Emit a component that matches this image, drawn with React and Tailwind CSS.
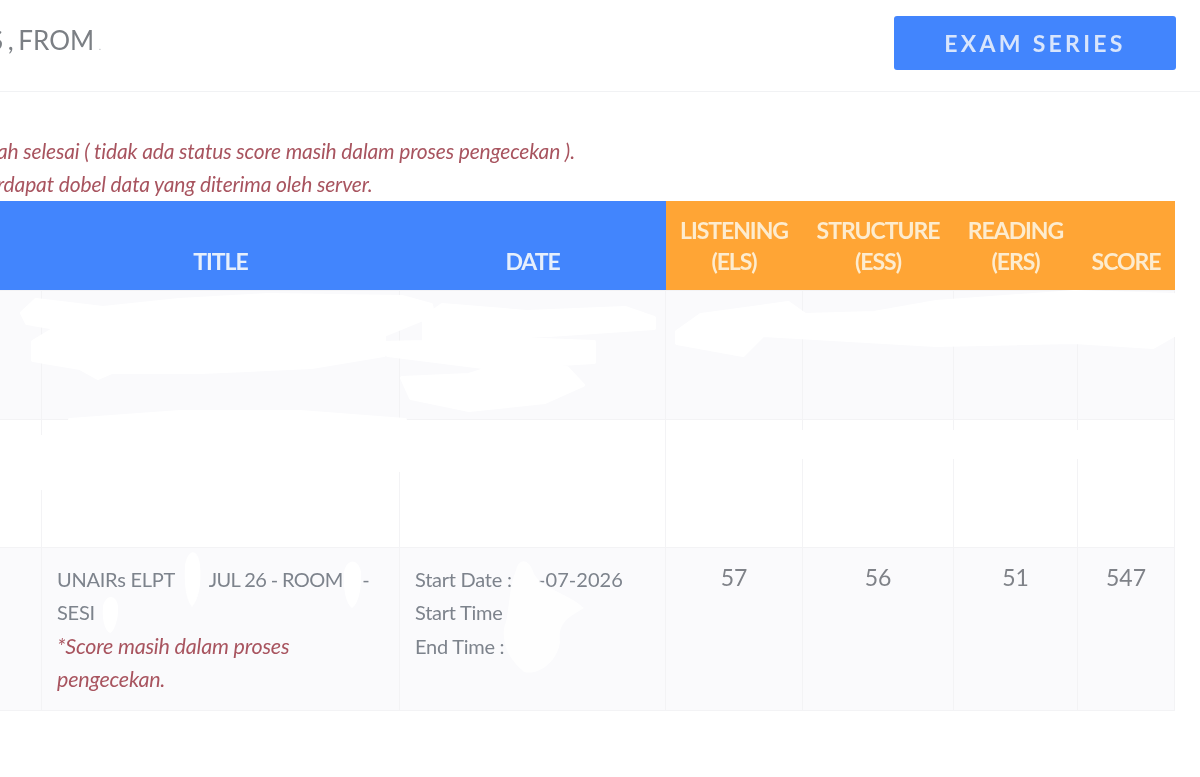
const font = { fontFamily: 'Lato, "Open Sans", sans-serif' };

const headerBlue = "bg-[#4285fd] text-[#e6effc] font-bold text-[23px] leading-[31px] tracking-[-1.05px] align-bottom pb-[13px] px-0 text-center";
const headerOrange = "bg-[#ffa535] text-[#fdeccf] font-bold text-[23px] leading-[31px] tracking-[-1.05px] align-bottom pb-[13px] px-0 text-center";
const cell = "border border-[#f3f3f5] align-top";
const scoreCell = "border border-[#f3f3f5] align-top text-center text-[23px] leading-[33px] pt-[13px] text-[#7f8288]";

function Row({ tone, height, title, date, scores }) {
  return (
    <tr className={tone} style={{ height }}>
      <td className={cell}></td>
      <td className={`${cell} pl-[15px] pr-4 pt-[15px] text-[20px] leading-[33.5px] text-[#7d838c] tracking-[-0.25px]`}>{title}</td>
      <td className={`${cell} pl-[15px] pr-2 pt-[15px] text-[20px] leading-[33.5px] text-[#7d838c] tracking-[-0.25px]`}>{date}</td>
      {[0, 1, 2, 3].map((i) => (
        <td key={i} className={scoreCell}>{scores ? scores[i] : ""}</td>
      ))}
    </tr>
  );
}

export default function App() {
  return (
    <div className="relative h-[777px] w-[1200px] overflow-hidden bg-white blur-[0.7px]" style={font}>
      <header className="flex h-[92px] items-start justify-between border-b border-[#f1f2f4] pr-6">
        <h1 className="ml-[-11px] mt-[23px] text-[26px] leading-[34px] text-[#7b7f84] tracking-[0px] [word-spacing:-2px]">
          S , FROM <span className="text-[10px] text-[#b9bcc0]">.</span>
        </h1>
        <button className="mt-4 flex h-[54px] w-[282px] items-center justify-center rounded-[3px] bg-[#4285fd] text-[23px] font-bold tracking-[3.3px] text-[#d8e5fc]">
          EXAM SERIES
        </button>
      </header>

      <div className="pt-[42px] pb-[1px] text-[21px] italic leading-[33px] text-[#a8545f] tracking-[-0.15px] whitespace-nowrap">
        <p className="ml-[-14px]">dah selesai ( tidak ada status score masih dalam proses pengecekan ).</p>
        <p className="ml-[-20px]">terdapat dobel data yang diterima oleh server.</p>
      </div>

      <table className="ml-[-1px] w-[1175px] table-fixed border-collapse">
        <colgroup>
          <col className="w-[42px]" />
          <col className="w-[358px]" />
          <col className="w-[266px]" />
          <col className="w-[137px]" />
          <col className="w-[151px]" />
          <col className="w-[124px]" />
          <col className="w-[97px]" />
        </colgroup>
        <thead>
          <tr className="h-[89px]">
            <th className={headerBlue}></th>
            <th className={headerBlue}>TITLE</th>
            <th className={headerBlue}>DATE</th>
            <th className={headerOrange}>LISTENING<br />(ELS)</th>
            <th className={headerOrange}>STRUCTURE<br />(ESS)</th>
            <th className={headerOrange}>READING<br />(ERS)</th>
            <th className={headerOrange}>SCORE</th>
          </tr>
        </thead>
        <tbody>
          <Row tone="bg-[#fafafc]" height={129} />
          <Row tone="bg-white" height={128} />
          <Row
            tone="bg-[#fafafc]"
            height={163}
            title={
              <>
                UNAIRs ELPT &nbsp;&nbsp;&nbsp;&nbsp;&nbsp;&nbsp;<span className="tracking-[-0.6px]">JUL 26 - ROOM</span> &nbsp;&nbsp;&nbsp;-
                <br />
                SESI
                <br />
                <em className="text-[#a8545f] text-[21.5px] tracking-[-0.2px]">*Score masih dalam proses pengecekan.</em>
              </>
            }
            date={
              <>
                Start Date : &nbsp;&nbsp;&nbsp;&nbsp;<span className="ml-[2px] tracking-[0.05px]">-07-2026</span>
                <br />
                Start Time
                <br />
                End Time :
              </>
            }
            scores={[57, 56, 51, 547]}
          />
        </tbody>
      </table>

      <svg className="absolute left-0 top-0 h-[777px] w-[1200px]" viewBox="0 0 1200 777" fill="#ffffff" stroke="#ffffff" strokeWidth="4" strokeLinejoin="round">
        <path d="M22 313 L36 300 L103 308 L179 300 L268 295 L402 297 L431 305 L433 315 L384 335 L384 355 L312 367 L201 372 L112 372 L98 378 L80 368 L33 360 L33 342 L56 328 L27 323 Z" />
        <path d="M424 318 L442 305 L527 312 L625 308 L654 318 L654 328 L549 335 L464 337 L594 342 L594 362 L491 368 L388 355 L384 343 L424 342 Z" />
        <path d="M402 378 L469 375 L491 368 L567 368 L583 385 L545 402 L469 410 L411 398 Z" />
        <path d="M677 332 L701 315 L788 303 L805 315 L874 313 L936 302 L1074 292 L1174 295 L1174 335 L1153 347 L1074 342 L936 345 L763 335 L743 355 L677 343 Z" />
        <path d="M70 420 L180 412 L300 412 L405 420 L405 470 L70 470 Z" />
        <path d="M38 437 H44 V488 H38 Z" />
        <path d="M398 450 H402 V462 H398 Z" />
        <path d="M690 432 H1170 V457 H690 Z" />
        <g strokeWidth="0">
          <path d="M185 565 C188 548 198 548 200 565 C202 585 198 600 192 607 C186 600 184 585 185 565 Z" />
          <path d="M344 572 C347 558 358 558 361 572 C362 590 358 604 352 608 C346 604 343 590 344 572 Z" />
          <path d="M103 606 C106 594 116 594 118 606 C119 618 114 632 110 633 C104 630 102 618 103 606 Z" />
          <path d="M516 570 C520 556 530 560 534 574 C544 590 566 592 584 608 C568 618 558 622 560 642 C558 660 540 676 524 672 C510 660 502 646 504 628 C510 612 508 590 516 570 Z" opacity="0.75" />
        </g>
      </svg>
    </div>
  );
}
